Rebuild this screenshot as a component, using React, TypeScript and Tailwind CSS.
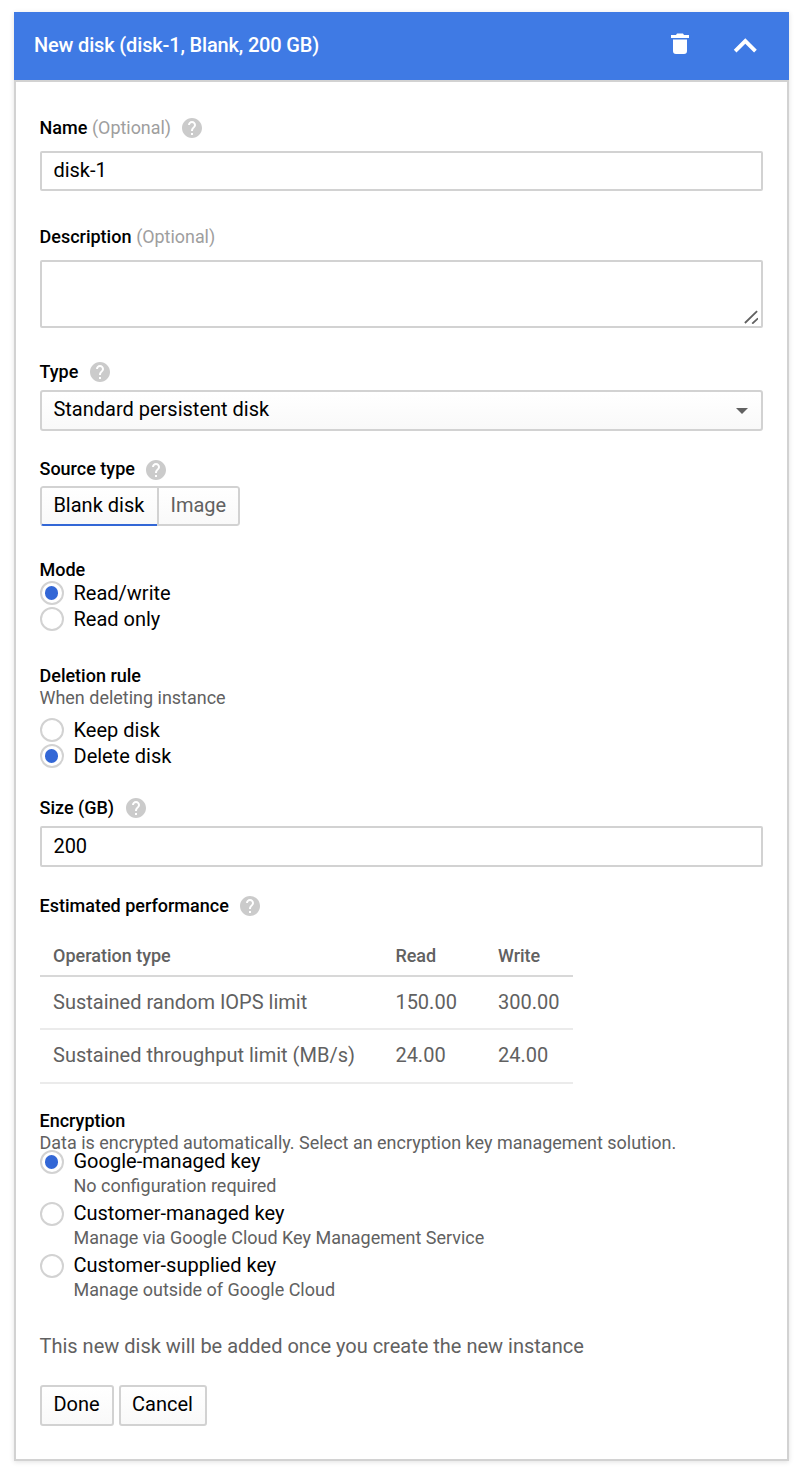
import React from "react";

function HelpIcon({ className = "" }: { className?: string }) {
  return (
    <svg viewBox="2 2 20 20" className={`h-5 w-5 shrink-0 fill-[#cbcbcb] ${className}`}>
      <path d="M12 2C6.48 2 2 6.48 2 12s4.48 10 10 10 10-4.48 10-10S17.52 2 12 2zm1 17h-2v-2h2v2zm2.07-7.75l-.9.92C13.45 12.9 13 13.5 13 15h-2v-.5c0-1.1.45-2.1 1.17-2.83l1.24-1.26c.37-.36.59-.86.59-1.41 0-1.1-.9-2-2-2s-2 .9-2 2H8c0-2.21 1.79-4 4-4s4 1.79 4 4c0 .88-.36 1.68-.93 2.25z" />
    </svg>
  );
}

function Label({
  text,
  optional,
  help,
  raisedText,
  className = "",
}: {
  text: string;
  optional?: boolean;
  help?: boolean;
  raisedText?: boolean;
  className?: string;
}) {
  return (
    <div className={`-ml-[0.5px] flex h-6 items-center text-[18px] leading-6 ${className}`}>
      <span className={`font-medium text-black ${raisedText ? "-mt-0.5" : ""}`}>{text}</span>
      {optional && <span className="ml-[4.7px] text-[17.9px] text-[#9e9e9e]">(Optional)</span>}
      {help && <HelpIcon className={optional ? "ml-[10.7px]" : "ml-[11.4px]"} />}
    </div>
  );
}

function Radio({ label, hint, checked }: { label: string; hint?: string; checked?: boolean }) {
  return (
    <div className="flex items-start">
      <span className="flex h-6 w-6 shrink-0 items-center justify-center rounded-full border-2 border-[#d2d2d2] bg-white">
        {checked && <span className="mr-px h-3.5 w-[13px] rounded-full bg-[#3367d6]" />}
      </span>
      <div className="ml-[9.5px]">
        <div className={`text-[20px] text-black ${hint ? "mb-px h-[23px] leading-[22px]" : "h-6 leading-6"}`}>
          {label}
        </div>
        {hint && <div className="h-6 text-[17.98px] leading-6 text-[#616161]">{hint}</div>}
      </div>
    </div>
  );
}

const field = "flex items-center border-2 border-[#d2d2d2] pl-[11.4px] text-[20px] text-black";
const raised = "bg-linear-to-b from-white to-[#f9f9f9] rounded-[3px]";

const rows = [
  ["Sustained random IOPS limit", "150.00", "300.00"],
  ["Sustained throughput limit (MB/s)", "24.00", "24.00"],
];

export default function App() {
  return (
    <div className="h-[1472px] w-[800px] bg-white pt-3 pl-3.5 font-[Roboto,sans-serif] whitespace-nowrap">
      <div className="w-[775px] shadow-[0_1px_5px_rgba(0,0,0,0.12)]">
        <div className="flex h-[68px] items-center bg-[#3f7ae4] pl-5 text-[20px] text-white">
          <span className="-mt-0.5 font-medium tracking-[-0.16px]">New disk (disk-1, Blank, 200 GB)</span>
          <svg viewBox="0 0 18 21" className="mr-[33px] -mt-[5px] ml-auto h-[21px] w-[18px] fill-white">
            <path d="M5 2 6 .4h6l1 1.6h5v3H0V2zM2 6.5h14V18q0 3-3 3H5q-3 0-3-3z" />
          </svg>
          <svg viewBox="0 0 24 24" className="mr-[21px] -mt-[1px] h-[46px] w-[46px] fill-white">
            <path d="M12.15 8l-6 6 1.41 1.41 4.59-4.58 4.59 4.58L18.15 14z" />
          </svg>
        </div>

        <div className="h-[1381px] border-2 border-[#d2d2d2] px-6 pt-[34px]">
          <Label text="Name" optional help />
          <div className={`${field} mt-[11px] h-10 rounded-[2px] pb-0.5`}>disk-1</div>

          <Label text="Description" optional className="mt-[34px]" />
          <div className={`${field} mt-[11px] h-[68px] items-end justify-end rounded-[2px] pr-[3px] pb-[2px]`}>
            <svg viewBox="0 0 14 14" className="h-3.5 w-3.5 fill-none stroke-[#616161] stroke-[1.8]">
              <path d="M.9 13 13.1 1.1M8.2 13.7l5.8-5.4" />
            </svg>
          </div>

          <Label text="Type" help className="mt-8" />
          <div className={`${field} ${raised} mt-1.5 h-[41px] justify-between pr-[13px] pb-1`}>
            <span>Standard persistent disk</span>
            <svg viewBox="0 0 12 6" className="mt-1 h-1.5 w-3 fill-[#616161]">
              <path d="M0 0h12L6 6z" />
            </svg>
          </div>

          <Label text="Source type" help raisedText className="mt-[27px]" />
          <div className={`${raised} mt-1 flex h-10 w-[200px] overflow-hidden text-[20px] leading-[34px]`}>
            <div className="w-[117px] rounded-l-[3px] border-2 border-r-0 border-[#d2d2d2] border-b-[#3367d6] pl-[11.4px] text-black">
              Blank disk
            </div>
            <div className="w-[83px] rounded-r-[3px] border-2 border-[#d2d2d2] pl-[11.5px] text-[#616161]">Image</div>
          </div>

          <Label text="Mode" className="mt-8 -mb-px" />
          <div className="flex flex-col gap-0.5">
            <Radio label="Read/write" checked />
            <Radio label="Read only" />
          </div>

          <Label text="Deletion rule" className="mt-[33px]" />
          <div className="-mt-0.5 -ml-[0.5px] h-6 text-[17.98px] leading-6 text-[#616161]">When deleting instance</div>
          <div className="mt-2 flex flex-col gap-0.5">
            <Radio label="Keep disk" />
            <Radio label="Delete disk" checked />
          </div>

          <Label text="Size (GB)" help className="mt-7" />
          <div className={`${field} mt-1.5 h-[41px] rounded-[2px] pb-0.5`}>200</div>

          <Label text="Estimated performance" help className="mt-[27px]" />
          <table className="mt-[19px] w-[533px] table-fixed border-separate border-spacing-0 text-left text-[20px] text-[#616161]">
            <colgroup>
              <col className="w-[342.4px]" />
              <col className="w-[102.6px]" />
              <col className="w-[88px]" />
            </colgroup>
            <thead>
              <tr className="h-10 text-[18px]">
                {["Operation type", "Read", "Write"].map((h) => (
                  <th key={h} className="border-b-2 border-[#d8d8d8] p-0 pb-0.5 pl-[13px] font-medium">{h}</th>
                ))}
              </tr>
            </thead>
            <tbody>
              {rows.map((r) => (
                <tr key={r[0]} className="h-[53px] last:h-[54px]">
                  {r.map((c, i) => (
                    <td key={i} className="border-b-2 border-[#ebebeb] p-0 pb-0.5 pl-[13px]">{c}</td>
                  ))}
                </tr>
              ))}
            </tbody>
          </table>

          <Label text="Encryption" className="mt-[25px]" />
          <div className="-mt-0.5 -ml-[0.5px] h-6 text-[17.98px] leading-6 text-[#616161]">
            Data is encrypted automatically. Select an encryption key management solution.
          </div>
          <div className="-mt-[5px] flex flex-col gap-1">
            <Radio label="Google-managed key" hint="No configuration required" checked />
            <Radio label="Customer-managed key" hint="Manage via Google Cloud Key Management Service" />
            <Radio label="Customer-supplied key" hint="Manage outside of Google Cloud" />
          </div>

          <div className="mt-8 -ml-[0.5px] h-6 text-[20px] leading-6 text-[#616161]">
            This new disk will be added once you create the new instance
          </div>
          <div className="mt-[27px] flex gap-[5px] text-[20px] leading-[35px] text-black">
            <button className={`${raised} h-[41px] w-[74px] border-2 border-[#d2d2d2] pr-px pb-0.5`}>Done</button>
            <button className={`${raised} h-[41px] w-[88px] border-2 border-[#d2d2d2] pr-px pb-0.5`}>Cancel</button>
          </div>
        </div>
      </div>
    </div>
  );
}
